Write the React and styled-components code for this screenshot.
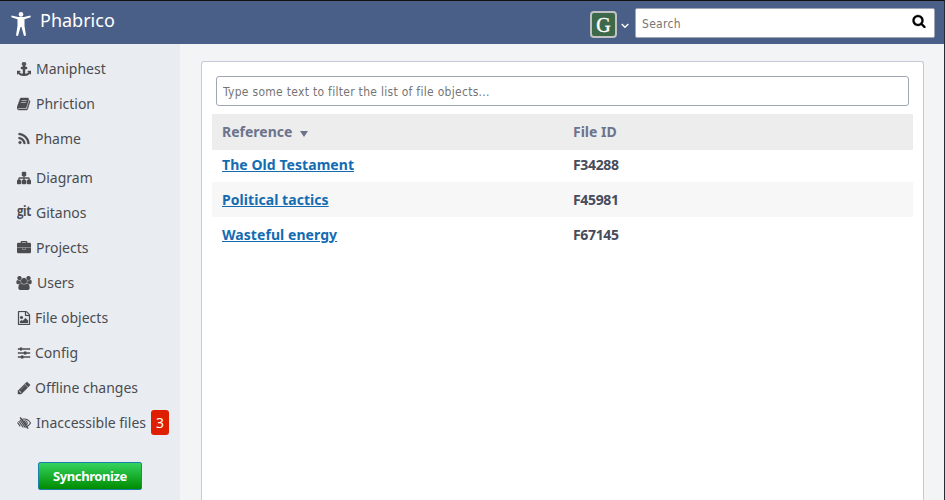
import React from "react";
import styled, { createGlobalStyle } from "styled-components";

const Global = createGlobalStyle`
  *, *::before, *::after { box-sizing: border-box; }
  body { margin: 0; overflow: hidden; font-family: "Noto Sans", sans-serif; font-size: 14px; color: #4a4c50; }
`;

const Page = styled.div`
  height: 500px;
  display: flex;
  flex-direction: column;
  background: #f3f4f6;
  border-top: 1px solid #111;
  border-right: 1px solid #2b2d33;
`;
const TopBar = styled.header`
  flex: 0 0 43px;
  display: flex;
  align-items: flex-start;
  background: #4a5f88;
  padding: 0 9px 0 11px;
`;
const Logo = styled.svg`
  width: 20px;
  height: 25px;
  margin-top: 11px;
`;
const Brand = styled.h1`
  margin: 5px auto 0 9px;
  font-size: 18px;
  font-weight: 400;
  line-height: 28px;
  color: #fff;
`;
const Avatar = styled.div`
  width: 27px;
  height: 27px;
  margin-top: 10px;
  border: 2px solid #bfc1c2;
  border-radius: 4px;
  background: #3d684a;
  color: #fff;
  font: 20px/24px "Liberation Serif", serif;
  -webkit-text-stroke: 0.4px #fff;
  text-align: center;
`;
const Chevron = styled.svg`
  width: 8px;
  height: 6px;
  margin: 22px 6px 0 4px;
`;
const Field = styled.div`
  display: flex;
  align-items: center;
  height: 30px;
  background: #fff;
  border: 1px solid #a1a6b4;
  border-radius: 2px;
`;
const SearchField = styled(Field)`
  width: 300px;
  margin-top: 7px;
  padding-right: 8px;
`;
const FilterField = styled(Field)`
  margin: 0 4px 8px;
  border-radius: 3px;
`;
const Input = styled.input`
  flex: 1;
  min-width: 0;
  border: 0;
  outline: 0;
  padding: 2px 6px 0;
  background: transparent;
  font: 12px "DejaVu Sans Condensed", "DejaVu Sans", sans-serif;
  font-stretch: condensed;
  letter-spacing: 0.29px;
  &::placeholder { color: #757575; opacity: 1; }
`;
const Body = styled.div`
  flex: 1;
  min-height: 0;
  display: flex;
`;
const Sidebar = styled.nav`
  width: 180px;
  padding-top: 7px;
  background: #e9edf2;
`;
const Item = styled.a`
  display: flex;
  align-items: center;
  height: 35px;
  margin-bottom: ${(p) => (p.$last ? "4px" : "0")};
  padding-left: ${(p) => p.$indent || 17}px;
  color: #4a4c50;
  white-space: nowrap;
`;
const Label = styled.span`
  margin-left: ${(p) => p.$gap || 5}px;
  line-height: 20px;
`;
const Glyph = styled.svg`
  flex: none;
  width: ${(p) => p.$w}px;
  height: 14px;
  fill: currentColor;
  stroke: currentColor;
  stroke-width: ${(p) => p.$weight ?? 40};
`;
const GitMark = styled.span`
  width: 14px;
  font: 700 14px/14px "Open Sans", sans-serif;
  letter-spacing: -0.5px;
  margin-top: -3px;
  transform: scaleX(0.82);
  transform-origin: left;
`;
const Count = styled.span`
  width: 18px;
  height: 25px;
  margin-left: 5px;
  border-radius: 3px;
  background: #df2000;
  color: #fff;
  line-height: 25px;
  text-align: center;
`;
const SyncButton = styled.button`
  display: block;
  width: 104px;
  height: 28px;
  margin: 22px 0 0 38px;
  padding: 0;
  border: 1px solid #1a7fa9;
  border-radius: 2px;
  background: linear-gradient(#34d35f, #008c00);
  color: #fff;
  font: 700 13px/24px "Noto Sans", sans-serif;
  letter-spacing: -0.4px;
`;
const Panel = styled.main`
  flex: 1;
  margin: 17px 20px 0 21px;
  padding: 14px 10px 0;
  background: #fff;
  border: 1px solid #c3ccd6;
  border-bottom: 0;
  border-radius: 3px 3px 0 0;
`;
const Row = styled.div`
  display: grid;
  grid-template-columns: 351px 1fr;
  align-items: center;
  height: ${(p) => p.$height || 35}px;
  padding-left: 10px;
  background: ${(p) => p.$bg || "#fff"};
  color: ${(p) => p.$color || "#464c5c"};
  font-weight: 700;
  font-size: 14px;
  line-height: 20px;
`;
const Cell = styled.span`
  display: flex;
  align-items: center;
`;
const IdCell = styled(Cell)`
  letter-spacing: -0.35px;
`;
const FirstRow = styled(Row)`
  padding-bottom: 3px;
`;
const FileLink = styled.a`
  color: #136cb2;
  text-decoration: underline;
  letter-spacing: 0.06px;
`;
const SortMark = styled.span`
  margin: 3px 0 0 8px;
  border: 4px solid transparent;
  border-top: 6px solid #6b748c;
  border-bottom: 0;
`;

const icons = {
  anchor: "M960 256q0-26-19-45t-45-19-45 19-19 45 19 45 45 19 45-19 19-45zm832 928v352q0 22-20 30-8 2-12 2-13 0-23-9l-93-93q-119 143-318.5 226.5t-429.5 83.5-429.5-83.5-318.5-226.5l-93 93q-9 9-23 9-4 0-12-2-20-8-20-30v-352q0-14 9-23t23-9h352q22 0 30 20 8 19-7 35l-100 100q67 91 189.5 153.5t271.5 82.5v-647h-192q-26 0-45-19t-19-45v-128q0-26 19-45t45-19h192v-163q-58-34-93-92.5t-35-128.5q0-106 75-181t181-75 181 75 75 181q0 70-35 128.5t-93 92.5v163h192q26 0 45 19t19 45v128q0 26-19 45t-45 19h-192v647q149-20 271.5-82.5t189.5-153.5l-100-100q-15-16-7-35 8-20 30-20h352q14 0 23 9t9 23z",
  book: "M1639 478q40 57 18 129l-275 906q-19 64-76.5 107.5t-122.5 43.5h-923q-77 0-148.5-53.5t-99.5-131.5q-24-67-2-127 0-4 3-27t4-37q1-8-3-21.5t-3-19.5q2-11 8-21t16.5-23.5 16.5-23.5q23-38 45-91.5t30-91.5q3-10 .5-30t-.5-28q3-11 17-28t17-23q21-36 42-92t25-90q1-9-2.5-32t.5-28q4-13 22-30.5t22-22.5q19-26 42.5-84.5t27.5-96.5q1-8-3-25.5t-2-26.5q2-8 9-18t18-23 17-21q8-12 16.5-30.5t15-35 16-36 19.5-32 26.5-23.5 36-11.5 47.5 5.5l-1 3q38-9 51-9h761q74 0 114 56t18 130l-274 906q-36 119-71.5 153.5t-128.5 34.5h-869q-27 0-38 15-11 16-1 43 24 70 144 70h923q29 0 56-15.5t35-41.5l300-987q7-22 5-57 38 15 59 43zm-1064 2q-4 13 2 22.5t20 9.5h608q13 0 25.5-9.5t16.5-22.5l21-64q4-13-2-22.5t-20-9.5h-608q-13 0-25.5 9.5t-16.5 22.5zm-83 256q-4 13 2 22.5t20 9.5h608q13 0 25.5-9.5t16.5-22.5l21-64q4-13-2-22.5t-20-9.5h-608q-13 0-25.5 9.5t-16.5 22.5z",
  rss: "M576 1344q0 80-56 136t-136 56-136-56-56-136 56-136 136-56 136 56 56 136zm512 123q2 28-17 48-18 21-47 21h-135q-25 0-43-16.5t-20-41.5q-22-229-184.5-391.5t-391.5-184.5q-25-2-41.5-20t-16.5-43v-135q0-29 21-47 17-17 43-17h5q160 13 306 80.5t259 181.5q114 113 181.5 259t80.5 306zm512 2q2 27-18 47-18 20-46 20h-143q-26 0-44.5-17.5t-19.5-42.5q-12-215-101-408.5t-231.5-336-336-231.5-408.5-102q-25-1-42.5-19.5t-17.5-43.5v-143q0-28 20-46 18-18 44-18h3q262 13 501.5 120t425.5 294q187 186 294 425.5t120 501.5z",
  sitemap: "M1792 1248v320q0 40-28 68t-68 28h-320q-40 0-68-28t-28-68v-320q0-40 28-68t68-28h96v-192h-512v192h96q40 0 68 28t28 68v320q0 40-28 68t-68 28h-320q-40 0-68-28t-28-68v-320q0-40 28-68t68-28h96v-192h-512v192h96q40 0 68 28t28 68v320q0 40-28 68t-68 28h-320q-40 0-68-28t-28-68v-320q0-40 28-68t68-28h96v-192q0-52 38-90t90-38h512v-192h-96q-40 0-68-28t-28-68v-320q0-40 28-68t68-28h320q40 0 68 28t28 68v320q0 40-28 68t-68 28h-96v192h512q52 0 90 38t38 90v192h96q40 0 68 28t28 68z",
  briefcase: "M640 256h512v-128h-512v128zm1152 640v480q0 66-47 113t-113 47h-1472q-66 0-113-47t-47-113v-480h672v160q0 26 19 45t45 19h320q26 0 45-19t19-45v-160h672zm-768 0v128h-256v-128h256zm768-480v384h-1792v-384q0-66 47-113t113-47h352v-160q0-40 28-68t68-28h576q40 0 68 28t28 68v160h352q66 0 113 47t47 113z",
  users: "M529 896q-162 5-265 128h-134q-82 0-138-40.5t-56-118.5q0-353 124-353 6 0 43.5 21t97.5 42.5 119 21.5q67 0 133-23-5 37-5 66 0 159 93 293zm1071 637q0 120-73 189.5t-194 69.5h-874q-121 0-194-69.5t-73-189.5q0-53 3.5-103.5t14-109 26.5-108.5 43-97.5 62-81 85.5-53.5 111.5-20q10 0 43 21.5t73 48 107 48 135 21.5 135-21.5 107-48 73-48 43-21.5q61 0 111.5 20t85.5 53.5 62 81 43 97.5 26.5 108.5 14 109 3.5 103.5zm-1024-1277q0 106-75 181t-181 75-181-75-75-181 75-181 181-75 181 75 75 181zm704 384q0 159-112.5 271.5t-271.5 112.5-271.5-112.5-112.5-271.5 112.5-271.5 271.5-112.5 271.5 112.5 112.5 271.5zm576 225q0 78-56 118.5t-138 40.5h-134q-103-123-265-128 93-134 93-293 0-29-5-66 66 23 133 23 59 0 119-21.5t97.5-42.5 43.5-21q124 0 124 353zm-128-609q0 106-75 181t-181 75-181-75-75-181 75-181 181-75 181 75 75 181z",
  image: "M1596 380q28 28 48 76t20 88v1152q0 40-28 68t-68 28h-1344q-40 0-68-28t-28-68v-1600q0-40 28-68t68-28h896q40 0 88 20t76 48zm-444-244v376h376q-10-29-22-41l-313-313q-12-12-41-22zm384 1528v-1024h-416q-40 0-68-28t-28-68v-416h-768v1536h1280zm-128-448v320h-1024v-192l192-192 128 128 384-384zm-832-192q-80 0-136-56t-56-136 56-136 136-56 136 56 56 136-56 136-136 56z",
  sliders: "M128 320h240v128H128zM640 320h1024v128H640zM384 224h240v320H384zM128 832h752v128H128zM1200 832h464v128h-464zM896 736h288v320H896zM128 1344h368v128H128zM816 1344h848v128H816zM512 1248h288v320H512z",
  pencil: "M491 1536l91-91-235-235-91 91v107h128v128h107zm523-928q0-22-22-22-10 0-17 7l-542 542q-7 7-7 17 0 22 22 22 10 0 17-7l542-542q7-7 7-17zm-54-192l416 416-832 832h-416v-416zm683 96q0 53-37 90l-166 166-416-416 166-165q36-38 90-38 53 0 91 38l235 234q37 39 37 91z",
  search: "M1216 832q0-185-131.5-316.5t-316.5-131.5-316.5 131.5-131.5 316.5 131.5 316.5 316.5 131.5 316.5-131.5 131.5-316.5zm512 832q0 52-38 90t-90 38q-54 0-90-38l-343-342q-179 124-399 124-143 0-273.5-55.5t-225-150-150-225-55.5-273.5 55.5-273.5 150-225 225-150 273.5-55.5 273.5 55.5 225 150 150 225 55.5 273.5q0 220-124 399l343 343q37 37 37 90z",
};

const menu = [
  { icon: "anchor", label: "Maniphest" },
  { icon: "book", label: "Phriction" },
  { icon: "rss", label: "Phame", gap: 4 , last: true },
  { icon: "sitemap", label: "Diagram" },
  { icon: "git", label: "Gitanos" },
  { icon: "briefcase", label: "Projects" },
  { icon: "users", label: "Users", indent: 16 },
  { icon: "image", label: "File objects", gap: 4 },
  { icon: "sliders", label: "Config", gap: 4 },
  { icon: "pencil", label: "Offline changes", gap: 4 },
  { icon: "eye", label: "Inaccessible files", count: 3 },
];

const SearchGlyph = styled(Glyph)`
  color: #000;
  margin-top: -4px;
`;

const EyeGlyph = styled.svg`
  flex: none;
  width: 14px;
  height: 14px;
  fill: none;
  stroke: currentColor;
`;

function MenuIcon({ name }) {
  if (name === "git") return <GitMark>git</GitMark>;
  if (name === "eye")
    return (
      <EyeGlyph viewBox="0 0 14 14">
        <path strokeWidth="1.1" d="M5 3.3Q10.5 1.8 13.5 7 11.7 10.2 8.7 11.1M8.2 4.6Q10.8 5.5 10 8.3" />
        <path strokeWidth="1.5" d="M3.2 1.5 11 12.6" />
        <path strokeWidth="1.2" d="M3 4 8.4 11.7M1.6 5 6.3 11.5M.5 6.5 3.3 10.3M6.6 4.3 9.8 8.8" />
      </EyeGlyph>
    );
  if (name === "users")
    return <Glyph $w={16} viewBox="-64 0 1920 1792"><path d={icons.users} /></Glyph>;
  return (
    <Glyph $w={14} $weight={name === "rss" || name === "image" ? 30 : 60} viewBox="0 0 1792 1792">
      <path d={icons[name]} />
    </Glyph>
  );
}

const files = [
  ["The Old Testament", "F34288"],
  ["Political tactics", "F45981"],
  ["Wasteful energy", "F67145"],
];

export default function App() {
  return (
    <>
      <Global />
      <Page>
        <TopBar>
          <Logo viewBox="0 0 20 25" fill="#fff">
            <circle cx="10" cy="2.4" r="2.3" />
            <path d="M.6 3.6 7 5h6l6.4-1.4.3 1.6-6.2 2v6.6l1.5 9.7-2 .5L10.5 15h-1L7 24l-2-.5 1.5-9.7V7.2L.3 5.2z" />
          </Logo>
          <Brand>Phabrico</Brand>
          <Avatar>G</Avatar>
          <Chevron viewBox="0 0 8 6" fill="none" stroke="#fff" strokeWidth="1.4">
            <path d="M.7 1 4 4.3 7.3 1" />
          </Chevron>
          <SearchField>
            <Input placeholder="Search" />
            <SearchGlyph $w={14} viewBox="0 0 1792 1792"><path d={icons.search} /></SearchGlyph>
          </SearchField>
        </TopBar>
        <Body>
          <Sidebar>
            {menu.map((m) => (
              <Item key={m.label} $last={m.last} $indent={m.indent}>
                <MenuIcon name={m.icon} />
                <Label $gap={m.gap}>{m.label}</Label>
                {m.count && <Count>{m.count}</Count>}
              </Item>
            ))}
            <SyncButton>Synchronize</SyncButton>
          </Sidebar>
          <Panel>
            <FilterField>
              <Input placeholder="Type some text to filter the list of file objects..." />
            </FilterField>
            <Row $height={36} $bg="#ededed" $color="#6b748c">
              <Cell>Reference<SortMark /></Cell>
              <Cell>File ID</Cell>
            </Row>
            {files.map(([name, id], i) => {
              const R = i === 0 ? FirstRow : Row;
              return (
                <R key={id} $height={i === 0 ? 32 : 35} $bg={i % 2 ? "#f7f7f7" : "#fff"}>
                  <Cell><FileLink>{name}</FileLink></Cell>
                  <IdCell>{id}</IdCell>
                </R>
              );
            })}
          </Panel>
        </Body>
      </Page>
    </>
  );
}
